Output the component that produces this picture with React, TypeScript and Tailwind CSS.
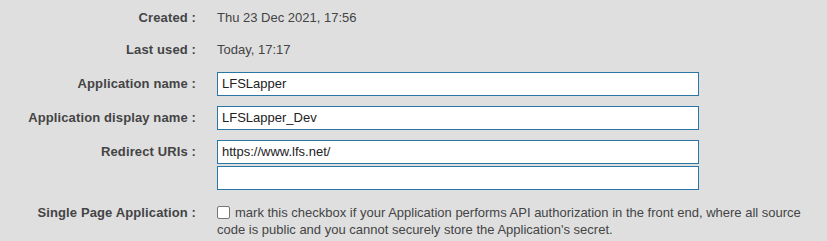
const font = { fontFamily: '"Liberation Sans", Arial, sans-serif' };

const Label = ({ children }: { children: React.ReactNode }) => (
  <div className="w-[197px] shrink-0 text-right font-bold text-[13px] tracking-[0.12px] text-[#444] pr-[1px]">{children}</div>
);

const Field = ({ value }: { value: string }) => (
  <div className="w-[482px] h-6 border border-[#2a77a6] bg-white flex items-center pl-[4px] text-[13px] text-[#222]">
    {value}
  </div>
);

export default function App() {
  return (
    <div className="w-[827px] h-[241px] bg-[#dfdfe0] pt-[2px] overflow-hidden" style={font}>
      <div className="flex items-center h-8 gap-[20px]">
        <Label>Created :</Label>
        <div className="text-[13px] text-[#444]">Thu 23 Dec 2021, 17:56</div>
      </div>
      <div className="flex items-center h-8 gap-[20px]">
        <Label>Last used :</Label>
        <div className="text-[13px] text-[#444]">Today, 17:17</div>
      </div>
      <div className="flex items-center mt-[6px] gap-[20px]">
        <Label>Application name :</Label>
        <Field value="LFSLapper" />
      </div>
      <div className="flex items-center mt-[10px] gap-[20px]">
        <Label>Application display name :</Label>
        <Field value="LFSLapper_Dev" />
      </div>
      <div className="flex items-start mt-[10px] gap-[20px]">
        <div className="h-6 flex items-center">
          <Label>Redirect URIs :</Label>
        </div>
        <div className="flex flex-col gap-[2px]">
          <Field value="https://www.lfs.net/" />
          <Field value="" />
        </div>
      </div>
      <div className="flex items-start mt-[14px] gap-[20px]">
        <div className="leading-[17px]">
          <Label>Single Page Application :</Label>
        </div>
        <div className="flex-1 pr-[10px] text-[13px] leading-[17px] text-[#444]">
          <span className="inline-block w-[13px] h-[13px] border border-[#767676] rounded-[2px] bg-white align-[-2px] mr-[5px]" />
          mark this checkbox if your Application performs API authorization in the front end, where all source code is public and you cannot securely store the Application's secret.
        </div>
      </div>
    </div>
  );
}
